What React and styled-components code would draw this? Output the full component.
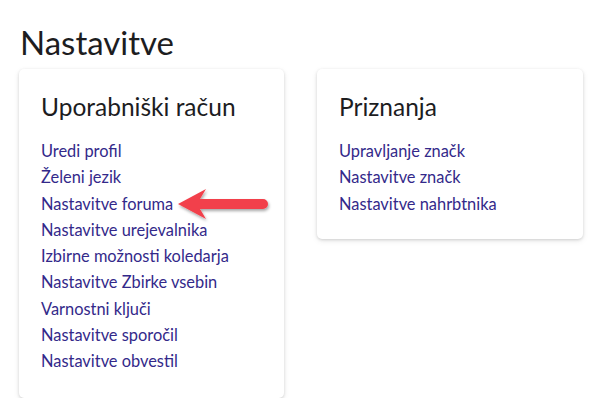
import styled, { createGlobalStyle } from "styled-components";

const GlobalStyle = createGlobalStyle`
  html, body {
    margin: 0;
    background: #ffffff;
  }
  body {
    font-family: Lato, "Noto Sans", sans-serif;
    color: #1d1d1f;
  }
`;

const Page = styled.div`
  padding: 22px 0 0 19px;
`;

const Title = styled.h1`
  margin: 0 0 7px 1px;
  font-size: 33px;
  font-weight: 400;
  line-height: 40px;
  color: #1d1d1f;
`;

const Grid = styled.div`
  display: flex;
  align-items: flex-start;
  gap: 33px;
`;

const Card = styled.section`
  flex: none;
  width: ${(p) => p.$width}px;
  box-sizing: border-box;
  padding: 22px 22px ${(p) => p.$bottom}px 22px;
  background: #fff;
  border-radius: 5px;
  box-shadow: 0 1px 3px rgba(0, 0, 0, 0.14), 0 2px 6px rgba(0, 0, 0, 0.08);
`;

const CardTitle = styled.h2`
  margin: 0 0 15px 0;
  font-size: 24.5px;
  font-weight: 400;
  line-height: 32px;
  color: #1d1d1f;
`;

const LinkList = styled.ul`
  list-style: none;
  margin: 0;
  padding: 0;
`;

const Item = styled.li`
  position: relative;
  line-height: 26.25px;
  font-size: 16.4px;
`;

const Link = styled.a`
  color: #33298a;
  text-decoration: none;
  white-space: nowrap;
`;

const Arrow = styled.svg`
  position: absolute;
  left: 137px;
  top: -2px;
  overflow: visible;
`;

const PointerArrow = () => (
  <Arrow width="92" height="30" viewBox="0 0 92 30">
    <defs>
      <filter id="arrowShadow" x="-20%" y="-40%" width="140%" height="180%">
        <feDropShadow dx="1" dy="2" stdDeviation="1.5" floodColor="#000" floodOpacity="0.35" />
      </filter>
    </defs>
    <path
      fill="#f2404b"
      filter="url(#arrowShadow)"
      d="M0 15 L28 0 L22 10 L85 10 A5 5 0 0 1 85 20 L22 20 L28 30 Z"
    />
  </Arrow>
);

const accountLinks = [
  "Uredi profil",
  "Želeni jezik",
  "Nastavitve foruma",
  "Nastavitve urejevalnika",
  "Izbirne možnosti koledarja",
  "Nastavitve Zbirke vsebin",
  "Varnostni ključi",
  "Nastavitve sporočil",
  "Nastavitve obvestil",
];

const badgeLinks = ["Upravljanje značk", "Nastavitve značk", "Nastavitve nahrbtnika"];

const App = () => (
  <>
    <GlobalStyle />
    <Page>
      <Title>Nastavitve</Title>
      <Grid>
        <Card $width={265} $bottom={24}>
          <CardTitle>Uporabniški račun</CardTitle>
          <LinkList>
            {accountLinks.map((label) => (
              <Item key={label}>
                <Link href="#">{label}</Link>
                {label === "Nastavitve foruma" && <PointerArrow />}
              </Item>
            ))}
          </LinkList>
        </Card>
        <Card $width={266} $bottom={22}>
          <CardTitle>Priznanja</CardTitle>
          <LinkList>
            {badgeLinks.map((label) => (
              <Item key={label}>
                <Link href="#">{label}</Link>
              </Item>
            ))}
          </LinkList>
        </Card>
      </Grid>
    </Page>
  </>
);

export default App;
